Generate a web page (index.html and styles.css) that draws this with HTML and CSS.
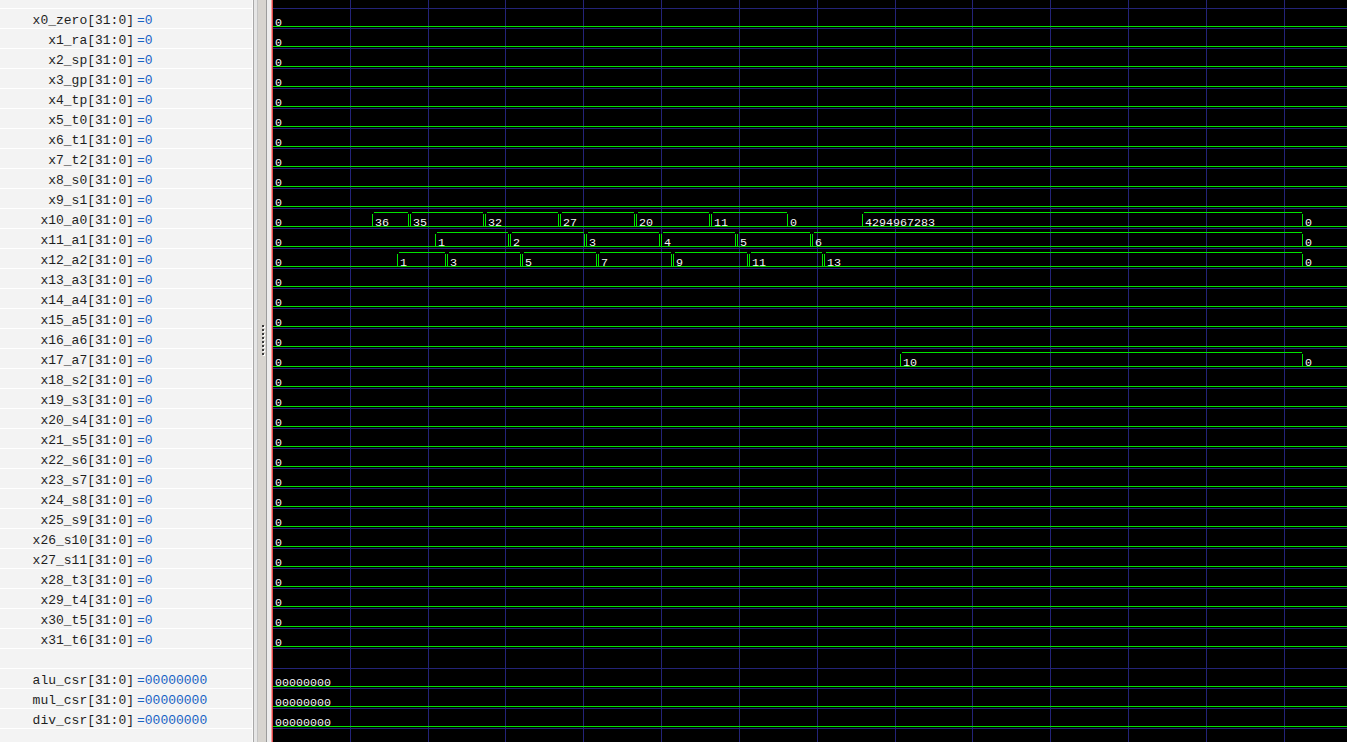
FILE: index.html
```html
<!DOCTYPE html>
<html lang="en">
<head>
  <meta charset="UTF-8" />
  <title>Waveform</title>
  <link rel="stylesheet" href="styles.css">
</head>
<body>
  <div class="signals">
    <div class="row top"></div>
    <div class="row"><span class="name">x0_zero[31:0]</span><span class="val">=0</span></div>
    <div class="row"><span class="name">x1_ra[31:0]</span><span class="val">=0</span></div>
    <div class="row"><span class="name">x2_sp[31:0]</span><span class="val">=0</span></div>
    <div class="row"><span class="name">x3_gp[31:0]</span><span class="val">=0</span></div>
    <div class="row"><span class="name">x4_tp[31:0]</span><span class="val">=0</span></div>
    <div class="row"><span class="name">x5_t0[31:0]</span><span class="val">=0</span></div>
    <div class="row"><span class="name">x6_t1[31:0]</span><span class="val">=0</span></div>
    <div class="row"><span class="name">x7_t2[31:0]</span><span class="val">=0</span></div>
    <div class="row"><span class="name">x8_s0[31:0]</span><span class="val">=0</span></div>
    <div class="row"><span class="name">x9_s1[31:0]</span><span class="val">=0</span></div>
    <div class="row"><span class="name">x10_a0[31:0]</span><span class="val">=0</span></div>
    <div class="row"><span class="name">x11_a1[31:0]</span><span class="val">=0</span></div>
    <div class="row"><span class="name">x12_a2[31:0]</span><span class="val">=0</span></div>
    <div class="row"><span class="name">x13_a3[31:0]</span><span class="val">=0</span></div>
    <div class="row"><span class="name">x14_a4[31:0]</span><span class="val">=0</span></div>
    <div class="row"><span class="name">x15_a5[31:0]</span><span class="val">=0</span></div>
    <div class="row"><span class="name">x16_a6[31:0]</span><span class="val">=0</span></div>
    <div class="row"><span class="name">x17_a7[31:0]</span><span class="val">=0</span></div>
    <div class="row"><span class="name">x18_s2[31:0]</span><span class="val">=0</span></div>
    <div class="row"><span class="name">x19_s3[31:0]</span><span class="val">=0</span></div>
    <div class="row"><span class="name">x20_s4[31:0]</span><span class="val">=0</span></div>
    <div class="row"><span class="name">x21_s5[31:0]</span><span class="val">=0</span></div>
    <div class="row"><span class="name">x22_s6[31:0]</span><span class="val">=0</span></div>
    <div class="row"><span class="name">x23_s7[31:0]</span><span class="val">=0</span></div>
    <div class="row"><span class="name">x24_s8[31:0]</span><span class="val">=0</span></div>
    <div class="row"><span class="name">x25_s9[31:0]</span><span class="val">=0</span></div>
    <div class="row"><span class="name">x26_s10[31:0]</span><span class="val">=0</span></div>
    <div class="row"><span class="name">x27_s11[31:0]</span><span class="val">=0</span></div>
    <div class="row"><span class="name">x28_t3[31:0]</span><span class="val">=0</span></div>
    <div class="row"><span class="name">x29_t4[31:0]</span><span class="val">=0</span></div>
    <div class="row"><span class="name">x30_t5[31:0]</span><span class="val">=0</span></div>
    <div class="row"><span class="name">x31_t6[31:0]</span><span class="val">=0</span></div>
    <div class="row"></div>
    <div class="row"><span class="name">alu_csr[31:0]</span><span class="val">=00000000</span></div>
    <div class="row"><span class="name">mul_csr[31:0]</span><span class="val">=00000000</span></div>
    <div class="row"><span class="name">div_csr[31:0]</span><span class="val">=00000000</span></div>
  </div>

  <div class="splitter">
    <div class="grip">
      <i></i><i></i><i></i><i></i><i></i><i></i><i></i><i></i>
    </div>
  </div>

  <svg id="wave" class="wave" width="1074" height="742" shape-rendering="crispEdges"></svg>

<script>
  const NS = "http://www.w3.org/2000/svg";
  const wave = document.getElementById("wave");
  const X0 = 273;          // left edge of the wave area on the page
  const END = 1349;

  function add(tag, attrs, text) {
    const e = document.createElementNS(NS, tag);
    for (const k in attrs) e.setAttribute(k, attrs[k]);
    if (text) e.textContent = text;
    wave.appendChild(e);
    return e;
  }

  // signals: list of [x on page, value]
  const sig = [];
  for (let i = 0; i < 32; i++) sig.push([[272, "0"]]);
  sig[10] = [[272, "0"], [372, "36"], [410, "35"], [485, "32"], [560, "27"], [636, "20"],
             [711, "11"], [789, "0"], [862, "4294967283"], [1304, "0"]];
  sig[11] = [[272, "0"], [435, "1"], [510, "2"], [586, "3"], [661, "4"], [737, "5"],
             [812, "6"], [1304, "0"]];
  sig[12] = [[272, "0"], [397, "1"], [447, "3"], [522, "5"], [598, "7"], [673, "9"],
             [749, "11"], [824, "13"], [1304, "0"]];
  sig[17] = [[272, "0"], [900, "10"], [1304, "0"]];
  sig.push(null);
  sig.push([[272, "00000000"]]);
  sig.push([[272, "00000000"]]);
  sig.push([[272, "00000000"]]);

  // grid
  for (let i = 0; i <= 36; i++) {
    const y = 8 + 20 * i + 0.5;
    add("line", { x1: 0, x2: 1074, y1: y, y2: y, class: "grid" });
  }
  for (let k = 1; k <= 13; k++) {
    const x = Math.round(272 + 77.83 * k) - X0 + 0.5;
    add("line", { x1: x, x2: x, y1: 0, y2: 742, class: "grid" });
  }

  // traces
  sig.forEach((s, i) => {
    if (!s) return;
    const top = 8 + 20 * i;
    const ty = top + 4.5, by = top + 18.5;
    add("line", { x1: 0, x2: 1074, y1: by, y2: by, class: "trace" });
    s.forEach(([t, v], j) => {
      const zero = /^0+$/.test(v);
      const next = j + 1 < s.length ? s[j + 1][0] : END;
      const x0 = t - X0 + 0.5, x1 = next - 2 - X0 + 0.5;
      if (!zero) {
        add("path", {
          d: `M${x0} ${ty + 1}V${by}M${x0 + 1} ${ty}H${x1 - 1}M${x1} ${ty + 1}V${by}`,
          class: "trace"
        });
      }
      const tx = j === 0 || !zero ? t + 3 : t + 1;
      add("text", { x: tx - X0, y: top + 18, class: "label" }, v);
    });
  });
</script>
</body>
</html>
```

FILE: styles.css
```css
html, body {
  margin: 0;
  height: 742px;
  overflow: hidden;
}
body {
  display: flex;
  background-color: #000;
}
.signals {
  width: 252px;
  flex: none;
  background-color: #f3f3f3;
  font-family: "Liberation Mono", monospace;
  font-size: 13px;
}
.row {
  height: 15px;
  padding-top: 4px;
  border-bottom: 1px solid #fff;
  display: flex;
  align-items: center;
  white-space: pre;
}
.row.top {
  height: 8px;
  padding-top: 0;
}
.name {
  width: 134px;
  text-align: right;
  color: #1e1e1e;
}
.val {
  padding-left: 3px;
  color: #1862c4;
}
.splitter {
  width: 21px;
  flex: none;
  background: linear-gradient(to right,
    #fbfbfb 0 1px, #a9a9a9 1px 2px, #e6e6e6 2px 5px, #c4c4c4 5px 6px,
    #d7d4cf 6px 14px, #9c9c9c 14px 15px, #ededed 15px 19px,
    #f2a0a0 19px 20px, #e04848 20px 21px);
}
.grip {
  display: flex;
  flex-direction: column;
  gap: 2px;
  margin: 325px 0 0 10px;
}
.grip i {
  width: 2px;
  height: 2px;
  background-color: #3a3a3a;
  box-shadow: 1px 1px 0 #fff;
}
.wave {
  flex: none;
  display: block;
}
.grid {
  stroke: #232378;
  stroke-width: 1;
}
.trace {
  stroke: #00e400;
  stroke-width: 1;
  fill: none;
}
.label {
  fill: #f4f4f4;
  font-family: "Liberation Mono", monospace;
  font-size: 11.67px;
}
```
